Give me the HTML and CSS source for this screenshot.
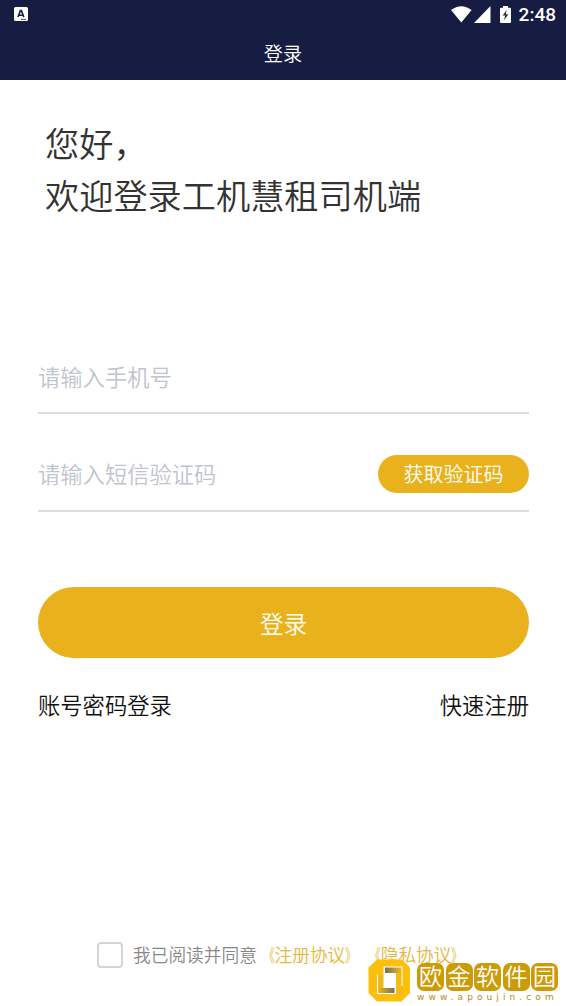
FILE: index.html
```html
<!DOCTYPE html>
<html lang="zh-CN">
<head>
<meta charset="utf-8">
<title>登录</title>
<link rel="stylesheet" href="styles.css">
</head>
<body>
<div class="screen">
  <header class="header">
    <div class="status">
      <svg class="app-icon" width="14" height="14" viewBox="0 0 14 14"><rect width="14" height="14" rx="1.5" fill="#fff"/><path d="M4 10L6.400 3.600H7.400L9.800 10M5 8.200H9" fill="none" stroke="#171c42" stroke-width="1.6"/><path d="M7 12.400H12" stroke="#171c42" stroke-width=".8"/></svg>
      <div class="status-right">
        <svg class="wifi" width="21" height="17" viewBox="0 0 21 17"><path d="M0 4Q10.300-3.600 20.600 4L10.300 16.600Z" fill="#fff"/></svg>
        <svg class="signal" width="17" height="17" viewBox="0 0 17 17"><path d="M16.500 0V17H0Z" fill="#fff"/></svg>
        <svg class="battery" width="11" height="17" viewBox="0 0 11 17"><path d="M3 0H8V1.800H10Q11 1.800 11 2.800V16Q11 17 10 17H1Q0 17 0 16V2.800Q0 1.800 1 1.800H3Z" fill="#fff"/><path d="M6.600 4L2.600 9.600H5L4.200 14.200L8.400 8.200H5.900Z" fill="#33363f"/></svg>
        <span class="clock">2:48</span>
      </div>
    </div>
    <h1 class="title">登录</h1>
  </header>
  <main class="main">
    <h2 class="greeting">您好，<br>欢迎登录工机慧租司机端</h2>
    <div class="field">请输入手机号</div>
    <div class="field field-code"><span>请输入短信验证码</span><button class="code-button">获取验证码</button></div>
    <button class="login-button">登录</button>
    <div class="links"><span>账号密码登录</span><span>快速注册</span></div>
  </main>
  <footer class="agreement">
    <span class="checkbox"></span><span>我已阅读并同意</span><span class="agreement-link"><span class="open">《</span>注册协议<span class="close">》</span></span><span class="agreement-link"><span class="open">《</span>隐私协议<span class="close">》</span></span>
  </footer>
  <div class="watermark">
    <svg class="mark-logo" width="43" height="43" viewBox="0 0 43 43">
      <defs>
        <linearGradient id="right"><stop stop-color="#746e58"/><stop offset="1" stop-color="#f0b916"/></linearGradient>
        <linearGradient id="left"><stop stop-color="#f0b916"/><stop offset="1" stop-color="#746e58"/></linearGradient>
      </defs>
      <path d="M9 .5H33.500L42 8.500V34L33.500 42.500H9L.5 34V8.500Z" fill="#fbc00c"/>
      <path d="M15.500 7.500H34.500V35H9V16H15.500Z" fill="#fff"/>
      <path d="M10 16H15.500V29H10Z" fill="#efb91a"/>
      <path d="M10 29H26.500V34H10Z" fill="url(#left)"/>
      <path d="M17 8.500H33.500V14H17Z" fill="url(#right)"/>
      <path d="M28 14H33.500V27H28ZM28 27H35V36H28Z" fill="#f5bc10"/>
    </svg>
    <div class="mark-text">
      <div class="mark-name"><span>欧</span><span>金</span><span>软</span><span>件</span><span>园</span></div>
      <div class="mark-url">www.apoujin.com</div>
    </div>
  </div>
</div>
</body>
</html>
```
FILE: styles.css
```css
* { box-sizing: border-box; }
body {
  margin: 0;
  background: #fff;
  font-family: "Noto Sans CJK SC DemiLight", "Noto Sans CJK SC", sans-serif;
  font-weight: 350;
}
.screen {
  position: relative;
  width: 566px;
  height: 1006px;
  overflow: hidden;
  display: flex;
  flex-direction: column;
}
.header { height: 80px; flex: none; background: #171c42; color: #fff; }
.status {
  height: 28px;
  padding: 0 10px 0 14px;
  display: flex;
  align-items: center;
  justify-content: space-between;
}
.status-right { display: flex; align-items: center; }
.signal { margin-left: 2px; }
.battery { margin-left: 9px; }
.clock {
  margin-left: 8px;
  font: 500 19px/28px Roboto, sans-serif;
  padding-top: 2px;
}
.title {
  margin: 0;
  padding-top: 11px;
  text-align: center;
  font-size: 19.2px;
  font-weight: 350;
  line-height: 28px;
}
.main { padding: 0 37px 0 38px; flex: 1; }
.greeting {
  margin: 0;
  padding: 37px 0 0 7px;
  height: 257px;
  font-size: 34.2px;
  font-weight: 350;
  line-height: 51.5px;
  color: #333;
}
.field {
  height: 77px;
  border-bottom: 2px solid #dcdde0;
  font-size: 22.3px;
  line-height: 78px;
  color: #c0c4cc;
}
.field-code {
  height: 98px;
  padding-top: 22px;
  display: flex;
  justify-content: space-between;
  align-items: center;
}
button {
  border: 0;
  padding: 0;
  font-family: inherit;
  font-weight: 350;
  background: #e9b11b;
  color: #fff;
}
.code-button {
  width: 151px;
  height: 38px;
  margin-top: 1px;
  border-radius: 19px;
  font-size: 20px;
  line-height: 36px;
}
.login-button {
  display: block;
  width: 100%;
  height: 71px;
  margin-top: 75px;
  border-radius: 36px;
  font-size: 23.6px;
  line-height: 68px;
}
.links {
  display: flex;
  justify-content: space-between;
  margin-top: 29px;
  font-size: 22.3px;
  line-height: 34px;
  color: #111;
}
.agreement {
  display: flex;
  align-items: center;
  height: 26px;
  margin-bottom: 38px;
  padding-left: 97px;
  font-size: 17.7px;
  line-height: 24px;
  color: #888;
  white-space: nowrap;
}
.agreement > span:not(.checkbox) { margin-top: -2px; }
.checkbox {
  width: 26px;
  height: 26px;
  margin-right: 10px;
  border: 2px solid #d5d5d5;
  border-radius: 4px;
}
.agreement-link { color: #e5b63a; }
.open, .close { display: inline-block; transform: scaleX(.65); }
.open { transform-origin: right; }
.close { transform-origin: left; }
.watermark {
  position: absolute;
  left: 368px;
  top: 959px;
  display: flex;
  gap: 6px;
}
.mark-text { padding-top: 4px; }
.mark-name { display: flex; gap: 1.5px; }
.mark-name span {
  width: 27px;
  height: 28px;
  border-radius: 7px;
  background: #cb9b0a;
  color: #fff;
  text-align: center;
  font-size: 23px;
  font-weight: 500;
  line-height: 25px;
}
.mark-url {
  margin-top: 1px;
  font: 400 9px/10px "DejaVu Sans", sans-serif;
  letter-spacing: 4.1px;
  color: #b88a18;
  white-space: nowrap;
}
```
